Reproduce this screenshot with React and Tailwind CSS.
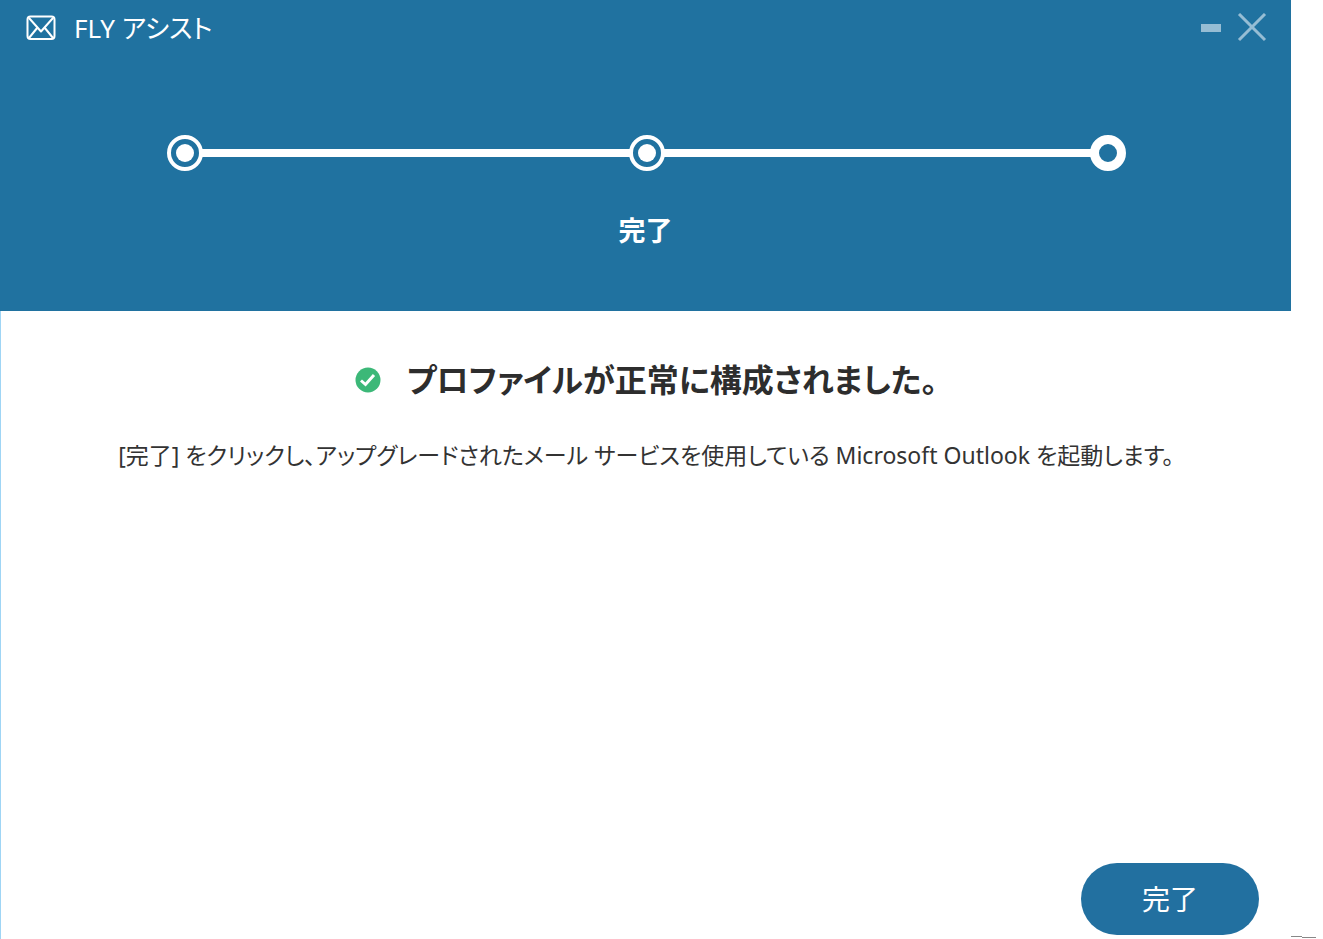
import { Fragment } from "react";

const steps = [
  { id: "start", done: true },
  { id: "configure", done: true },
  { id: "finish", done: false },
];

function MailIcon() {
  return (
    <svg
      viewBox="0 0 30 26"
      fill="none"
      stroke="currentColor"
      strokeWidth={2}
      strokeLinejoin="round"
      className="h-[26px] w-[30px]"
      aria-hidden="true"
    >
      <rect x="1.5" y="1.5" width="27" height="22.5" rx="3" />
      <path d="M3 3l8.500 9.500L15 16.500l3.500-4L27 3M3 23l8.500-10.500M27 23l-8.500-10.500" />
    </svg>
  );
}

function SuccessIcon() {
  return (
    <svg viewBox="0 0 26 26" className="size-[26px] shrink-0" aria-hidden="true">
      <circle cx="13" cy="13" r="12.500" fill="#3cb878" />
      <path
        d="M6 13.500l4.500 4L19 8"
        fill="none"
        stroke="white"
        strokeWidth={3}
      />
    </svg>
  );
}

function StepDot({ done }) {
  if (!done) {
    return <li className="size-9 shrink-0 rounded-full border-9 border-white" />;
  }

  return (
    <li className="flex size-9 shrink-0 items-center justify-center rounded-full border-4 border-white">
      <span className="size-[18px] rounded-full bg-white" />
    </li>
  );
}

function TitleBar() {
  return (
    <div className="flex h-14 items-center justify-between pr-6 pl-[26px]">
      <div className="flex items-center gap-[18px]">
        <MailIcon />
        <h1 className="text-[26px] leading-8">FLY アシスト</h1>
      </div>

      <div className="flex items-center gap-4 text-[#96bdd4]">
        <button type="button" aria-label="最小化">
          <svg viewBox="0 0 20 30" className="h-[30px] w-5" fill="currentColor">
            <rect y="11" width="20" height="8" />
          </svg>
        </button>
        <button type="button" aria-label="閉じる">
          <svg
            viewBox="0 0 30 30"
            className="size-[30px]"
            fill="none"
            stroke="currentColor"
            strokeWidth={3}
          >
            <path d="M2 1l26 26M28 1l-26 26" />
          </svg>
        </button>
      </div>
    </div>
  );
}

export default function App() {
  return (
    <div className="flex min-h-screen overflow-hidden bg-white font-['Noto_Sans','Noto_Sans_CJK_JP',sans-serif] text-[#333] [font-feature-settings:'palt']">
      <div className="flex flex-1 flex-col">
        <header className="h-[311px] bg-[#2072a0] text-white">
          <TitleBar />
          <ol className="mt-[79px] mr-[165px] ml-[167px] flex items-center">
            {steps.map((step, index) => (
              <Fragment key={step.id}>
                {index > 0 && (
                  <li className="-mx-px h-2 flex-1 bg-white" aria-hidden="true" />
                )}
                <StepDot done={step.done} />
              </Fragment>
            ))}
          </ol>
          <p className="mt-10 text-center text-[27px] leading-10 font-bold">
            完了
          </p>
        </header>

        <div className="flex flex-1 flex-col border-l border-[#9fd5f5]">
          <main className="flex flex-col items-center pt-11">
            <div className="flex items-center gap-[26px]">
              <SuccessIcon />
              <h2 className="text-[32px] leading-[50px] font-bold whitespace-nowrap text-[#2d2d2d]">
                プロファイルが正常に構成されました。
              </h2>
            </div>
            <p className="mt-[30px] text-[23px] leading-10 whitespace-nowrap">
              [完了] をクリックし、アップグレードされたメール サービスを使用している
              Microsoft Outlook を起動します。
            </p>
          </main>

          <footer className="mt-auto flex justify-end pr-8 pb-1">
            <button
              type="button"
              className="h-[72px] w-[178px] rounded-full bg-[#2270a0] text-[28px] leading-10 text-white"
            >
              完了
            </button>
          </footer>
        </div>
      </div>

      <div className="flex w-8 shrink-0 items-end" aria-hidden="true">
        <svg viewBox="0 0 26 4" className="h-1 w-[26px]" fill="#888888">
          <rect width="11" height="1" y="1" />
          <rect x="11" width="14" height="1" y="2" />
        </svg>
      </div>
    </div>
  );
}
